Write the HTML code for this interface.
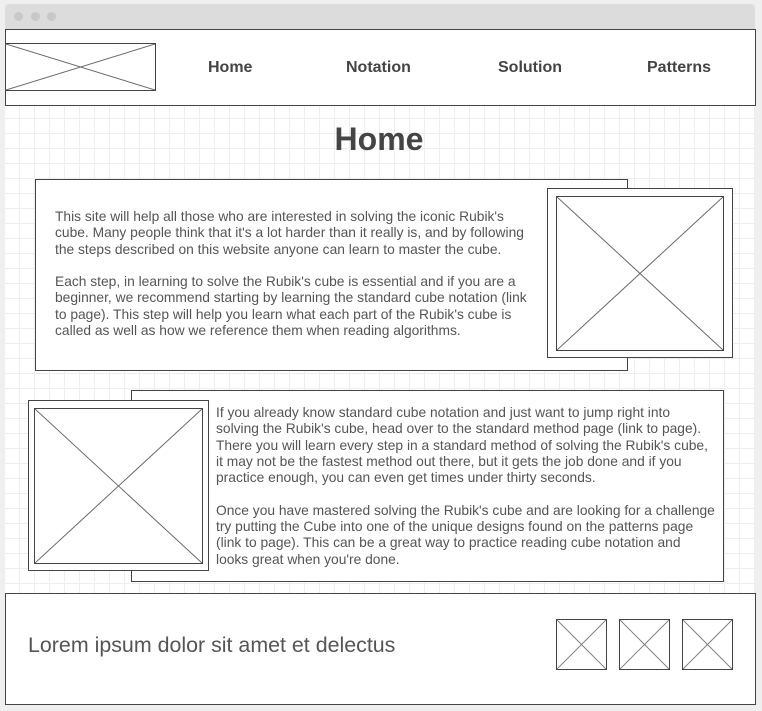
<!DOCTYPE html>
<html><head><style>
*{margin:0;padding:0;box-sizing:border-box}
body{width:762px;height:711px;background:#efefef;position:relative;overflow:hidden;font-family:"Liberation Sans",sans-serif;color:#444}
.a{position:absolute}
.b{border:1px solid #444;background:#fff}
svg{position:absolute;left:0;top:0;width:100%;height:100%}
.t{font-size:13.8px;line-height:16.3px;color:#555;white-space:nowrap}
.nav{font-weight:bold;font-size:16px;color:#444;top:59px}
</style></head><body>
<div class="a" style="left:5px;top:4px;width:750px;height:26px;background:#dcdcdc;border-radius:4px 4px 0 0"></div>
<div class="a" style="left:14px;top:12px;width:9px;height:9px;border-radius:50%;background:#c8c8c8"></div>
<div class="a" style="left:31px;top:12px;width:9px;height:9px;border-radius:50%;background:#c8c8c8"></div>
<div class="a" style="left:47px;top:12px;width:9px;height:9px;border-radius:50%;background:#c8c8c8"></div>
<div class="a" style="left:5px;top:105px;width:750px;height:489px;background-color:#fff;background-image:linear-gradient(#eee 1px,transparent 1px),linear-gradient(90deg,#eee 1px,transparent 1px);background-size:15px 15px;background-position:-1px 13px"></div>
<div class="a b" style="left:5px;top:29px;width:751px;height:77px"></div>
<div class="a b" style="left:5px;top:43px;width:151px;height:48px"><svg viewBox="0 0 151 48" preserveAspectRatio="none"><path d="M0 0L151 48M151 0L0 48" stroke="#666" stroke-width="1"/></svg></div>
<div class="a nav" style="left:208px">Home</div>
<div class="a nav" style="left:346px">Notation</div>
<div class="a nav" style="left:498px">Solution</div>
<div class="a nav" style="left:647px;top:59px">Patterns</div>
<div class="a" style="left:0;width:758px;top:121px;text-align:center;font-weight:bold;font-size:32px;color:#444">Home</div>

<div class="a b" style="left:35px;top:179px;width:593px;height:192px"></div>
<div class="a t" style="left:55px;top:209px">This site will help all those who are interested in solving the iconic Rubik's<br>cube. Many people think that it's a lot harder than it really is, and by following<br>the steps described on this website anyone can learn to master the cube.<br><br>Each step, in learning to solve the Rubik's cube is essential and if you are a<br>beginner, we recommend starting by learning the standard cube notation (link<br>to page). This step will help you learn what each part of the Rubik's cube is<br>called as well as how we reference them when reading algorithms.</div>
<div class="a b" style="left:547px;top:188px;width:186px;height:170px"></div>
<div class="a b" style="left:556px;top:196px;width:168px;height:155px"><svg viewBox="0 0 168 155" preserveAspectRatio="none"><path d="M0 0L168 155M168 0L0 155" stroke="#666" stroke-width="1"/></svg></div>

<div class="a b" style="left:131px;top:390px;width:593px;height:192px"></div>
<div class="a t" style="left:216px;top:405px">If you already know standard cube notation and just want to jump right into<br>solving the Rubik's cube, head over to the standard method page (link to page).<br>There you will learn every step in a standard method of solving the Rubik's cube,<br>it may not be the fastest method out there, but it gets the job done and if you<br>practice enough, you can even get times under thirty seconds.<br><br>Once you have mastered solving the Rubik's cube and are looking for a challenge<br>try putting the Cube into one of the unique designs found on the patterns page<br>(link to page). This can be a great way to practice reading cube notation and<br>looks great when you're done.</div>
<div class="a b" style="left:28px;top:400px;width:181px;height:171px"></div>
<div class="a b" style="left:34px;top:408px;width:169px;height:156px"><svg viewBox="0 0 169 156" preserveAspectRatio="none"><path d="M0 0L169 156M169 0L0 156" stroke="#666" stroke-width="1"/></svg></div>

<div class="a b" style="left:5px;top:593px;width:751px;height:112px"></div>
<div class="a" style="left:28px;top:633px;font-size:21.4px;color:#555">Lorem ipsum dolor sit amet et delectus</div>
<div class="a b" style="left:556px;top:619px;width:51px;height:51px"><svg viewBox="0 0 51 51" preserveAspectRatio="none"><path d="M0 0L51 51M51 0L0 51" stroke="#777"/></svg></div>
<div class="a b" style="left:619px;top:619px;width:51px;height:51px"><svg viewBox="0 0 51 51" preserveAspectRatio="none"><path d="M0 0L51 51M51 0L0 51" stroke="#777"/></svg></div>
<div class="a b" style="left:682px;top:619px;width:51px;height:51px"><svg viewBox="0 0 51 51" preserveAspectRatio="none"><path d="M0 0L51 51M51 0L0 51" stroke="#777"/></svg></div>
</body></html>
